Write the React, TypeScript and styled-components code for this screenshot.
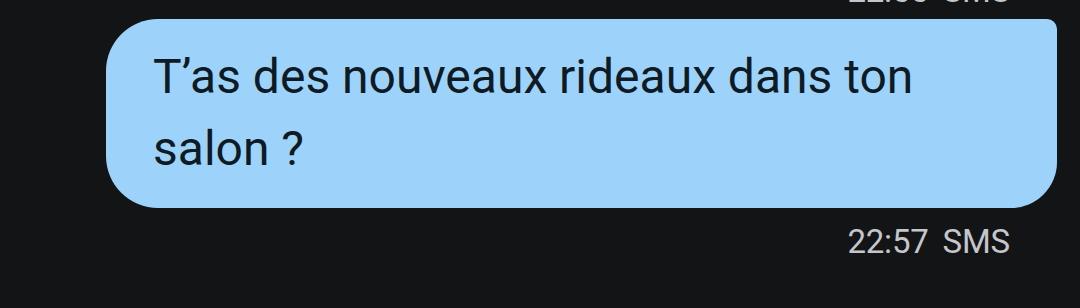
import React from "react";
import styled, { createGlobalStyle } from "styled-components";

const Global = createGlobalStyle`
  html, body { margin: 0; padding: 0; background: #131416; }
  body { font-family: Roboto, "Noto Sans", sans-serif; overflow: hidden; }
`;

const Screen = styled.div`
  width: 1080px;
  height: 308px;
  background: #131416;
  display: flex;
  flex-direction: column;
  align-items: flex-end;
  overflow: hidden;
`;

const Meta = styled.div<{ $offset: number }>`
  display: flex;
  gap: 14px;
  margin-top: ${(p) => p.$offset}px;
  padding-right: 70px;
  font-size: 33px;
  line-height: 42px;
  color: #c4c6cb;
  letter-spacing: -0.2px;
`;

const Bubble = styled.div`
  box-sizing: border-box;
  width: 951px;
  margin-top: 7px;
  margin-right: 23px;
  padding: 22px 47px 23px 47px;
  background: #9dd3fa;
  color: #0e1a24;
  font-size: 48px;
  line-height: 72px;
  border-radius: 52px 10px 46px 52px;
`;

export default function App() {
  return (
    <>
      <Global />
      <Screen>
        <Meta $offset={-30}>
          <span>22:55</span>
          <span>SMS</span>
        </Meta>
        <Bubble>T’as des nouveaux rideaux dans ton salon ?</Bubble>
        <Meta $offset={13}>
          <span>22:57</span>
          <span>SMS</span>
        </Meta>
      </Screen>
    </>
  );
}
